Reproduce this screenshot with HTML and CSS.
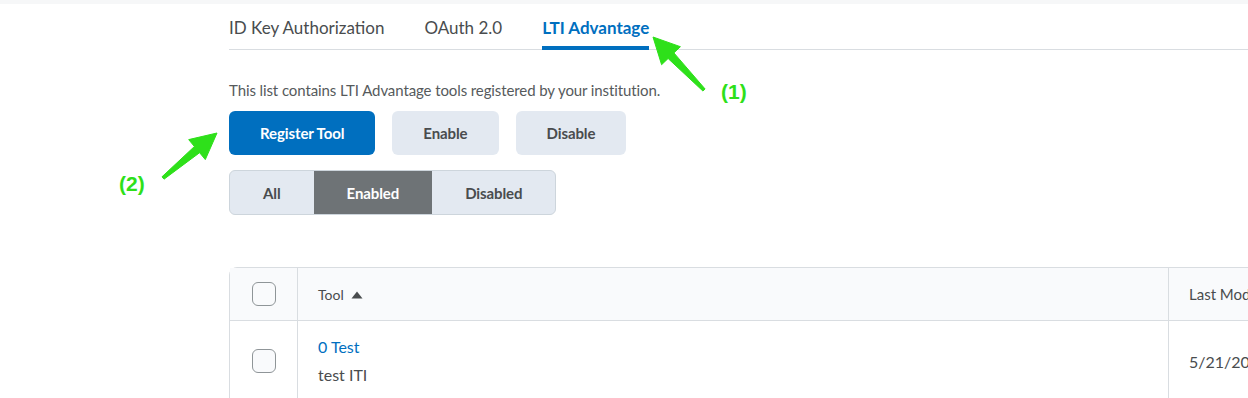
FILE: index.html
```html
<!DOCTYPE html>
<html lang="en">
  <head>
    <meta charset="UTF-8" />
    <meta name="viewport" content="width=device-width, initial-scale=1.0" />
    <title>LTI Advantage</title>
    <link rel="stylesheet" href="styles.css">
  </head>
  <body>
    <div class="topbar"></div>
    <div class="page">
      <div class="tabs">
        <a class="tab">ID Key Authorization</a>
        <a class="tab">OAuth 2.0</a>
        <a class="tab active">LTI Advantage</a>
      </div>

      <p class="intro">This list contains LTI Advantage tools registered by your institution.</p>

      <div class="actions">
        <button class="btn primary">Register Tool</button>
        <button class="btn">Enable</button>
        <button class="btn">Disable</button>
      </div>

      <div class="segments">
        <button class="seg">All</button>
        <button class="seg selected">Enabled</button>
        <button class="seg">Disabled</button>
      </div>

      <table class="tools">
        <thead>
          <tr>
            <th class="check-col"><span class="checkbox"></span></th>
            <th class="tool-col">
              Tool
              <svg class="sort" width="12" height="8" viewBox="0 0 12 8"><path d="M6 0.5 L11.5 7.5 L0.5 7.5 Z" fill="#494c4e" /></svg>
            </th>
            <th class="date-col">Last Modified</th>
          </tr>
        </thead>
        <tbody>
          <tr>
            <td class="check-col"><span class="checkbox"></span></td>
            <td class="tool-col">
              <a class="tool-name">0 Test</a>
              <div class="tool-desc">test ITI</div>
            </td>
            <td class="date-col">5/21/2020</td>
          </tr>
        </tbody>
      </table>
    </div>

    <!-- annotation arrows -->
    <svg class="notes" width="1248" height="398" viewBox="0 0 1248 398">
      <g fill="#2ee01a" stroke="#2ee01a" stroke-width="1" stroke-linejoin="round">
        <polygon points="653,37 680.4,46.7 673.9,52.9 705.1,89 702.9,91 668.1,58.5 661.6,64.7" />
        <polygon points="217,133 205.3,159.6 199.6,152.7 164,179.2 162,176.8 194.4,146.5 188.7,139.6" />
      </g>
      <g class="note-label">
        <text x="721" y="99">(1)</text>
        <text x="119" y="191">(2)</text>
      </g>
    </svg>
  </body>
</html>
```

FILE: styles.css
```css
body {
  font-family: Lato, "Open Sans", sans-serif;
  margin: 0;
  padding: 0;
  background-color: #fff;
  color: #494c4e;
  width: 1248px;
  height: 398px;
  overflow: hidden;
  position: relative;
}
.topbar {
  height: 4px;
  background-color: #f6f7f8;
}
.page {
  margin-left: 229px;
  width: 1200px;
}
.tabs {
  display: flex;
  gap: 40px;
  border-bottom: 1px solid #d9dde1;
  height: 45px;
}
.tab {
  font-size: 17px;
  line-height: 20px;
  padding-top: 14px;
  color: #494c4e;
  border-bottom: 4px solid transparent;
  margin-bottom: -1px;
}
.tab.active {
  color: #006fbf;
  font-weight: bold;
  border-bottom-color: #006fbf;
}
.intro {
  font-size: 15px;
  letter-spacing: -0.1px;
  color: #565a5c;
  margin: 31px 0 12px;
  line-height: 18px;
}
.actions {
  display: flex;
  gap: 17px;
}
.btn {
  font-family: inherit;
  font-size: 15px;
  font-weight: bold;
  letter-spacing: -0.1px;
  height: 44px;
  padding: 0 31px;
  border: none;
  border-radius: 6px;
  background-color: #e3e9f1;
  color: #494c4e;
}
.btn.primary {
  background-color: #006fbf;
  color: #fff;
}
.segments {
  display: inline-flex;
  margin-top: 15px;
  border: 1px solid #cdd5dc;
  border-radius: 6px;
  overflow: hidden;
  background-color: #e3e9f1;
}
.seg {
  font-family: inherit;
  font-size: 15px;
  font-weight: bold;
  letter-spacing: -0.1px;
  height: 43px;
  padding: 0 33px;
  border: none;
  background-color: transparent;
  color: #494c4e;
}
.seg.selected {
  background-color: #6e7376;
  color: #fff;
}
.tools {
  margin-top: 52px;
  width: 1200px;
  border-collapse: separate;
  border-spacing: 0;
  border: 1px solid #d9dde1;
  border-radius: 8px 0 0 0;
}
.tools th {
  background-color: #f9fafc;
  height: 52px;
  font-size: 14px;
  font-weight: normal;
  text-align: left;
  border-bottom: 1px solid #d9dde1;
}
.tools th.date-col {
  font-size: 15px;
}
.tools td {
  height: 80px;
  font-size: 16px;
  vertical-align: top;
  padding-top: 15px;
  box-sizing: border-box;
}
.tools td.check-col {
  vertical-align: middle;
  padding-top: 0;
}
.tools td.date-col {
  vertical-align: middle;
  padding-top: 0;
}
.check-col {
  width: 67px;
  padding: 0;
  text-align: center !important;
  border-right: 1px solid #d9dde1;
}
.tool-col {
  padding: 0 20px;
  width: 830px;
}
.date-col {
  padding: 0 20px;
  border-left: 1px solid #d9dde1;
  white-space: nowrap;
}
.checkbox {
  display: inline-block;
  width: 22px;
  height: 22px;
  border: 1px solid #8f9598;
  border-radius: 6px;
  background-color: #f9fafc;
  vertical-align: middle;
}
.sort {
  margin-left: 4px;
  vertical-align: 1px;
}
.tool-name {
  color: #006fbf;
  display: block;
  line-height: 22px;
}
.tool-desc {
  line-height: 22px;
  margin-top: 6px;
}
.notes {
  position: absolute;
  left: 0;
  top: 0;
  pointer-events: none;
}
.note-label text {
  font-family: "Liberation Sans", sans-serif;
  font-weight: bold;
  font-size: 21px;
  fill: #2ee01a;
  stroke: #fff;
  stroke-width: 3px;
  paint-order: stroke;
}
```
